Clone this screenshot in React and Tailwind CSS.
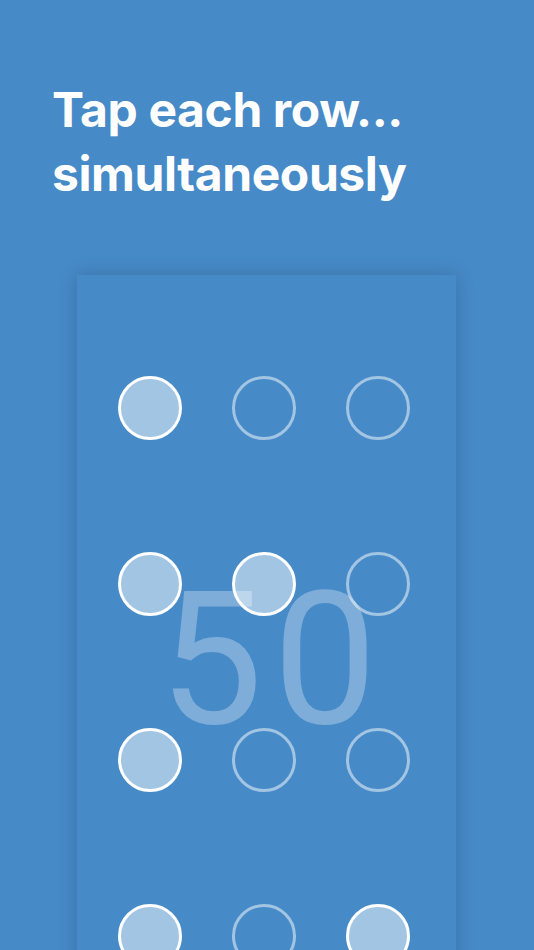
import React from "react";

const rows = [
  [true, false, false],
  [true, true, false],
  [true, false, false],
  [true, false, true],
];

function Dot({ on }) {
  return on ? (
    <div className="w-[64px] h-[64px] rounded-full border-[3px] border-white bg-white/50" />
  ) : (
    <div className="w-[64px] h-[64px] rounded-full border-[3px] border-white/50" />
  );
}

export default function App() {
  return (
    <div className="w-[534px] h-[950px] overflow-hidden bg-[#468ac8] relative" style={{ fontFamily: "Inter, 'Noto Sans', sans-serif" }}>
      <h1 className="pt-[78px] pl-[52px] text-white font-bold text-[48px] leading-[64px] tracking-[-0.4px]">
        Tap each row...
        <br />
        simultaneously
      </h1>
      <div className="mt-[69px] ml-[77px] w-[379px] h-[700px] bg-[#468ac8] shadow-[0_0_18px_rgba(0,0,0,0.18)] relative">
        <div className="pt-[101px] pl-[41px] flex flex-col gap-[112px]">
          {rows.map((r, i) => (
            <div key={i} className="flex gap-[50px]">
              {r.map((on, j) => (
                <Dot key={j} on={on} />
              ))}
            </div>
          ))}
        </div>
        <div
          className="absolute left-0 right-0 top-[285px] pl-[13px] text-center text-white/30 text-[185px] leading-[200px] font-normal tracking-[10px]"
          style={{ fontFamily: "Roboto, 'Liberation Sans', sans-serif" }}
        >
          50
        </div>
      </div>
    </div>
  );
}
